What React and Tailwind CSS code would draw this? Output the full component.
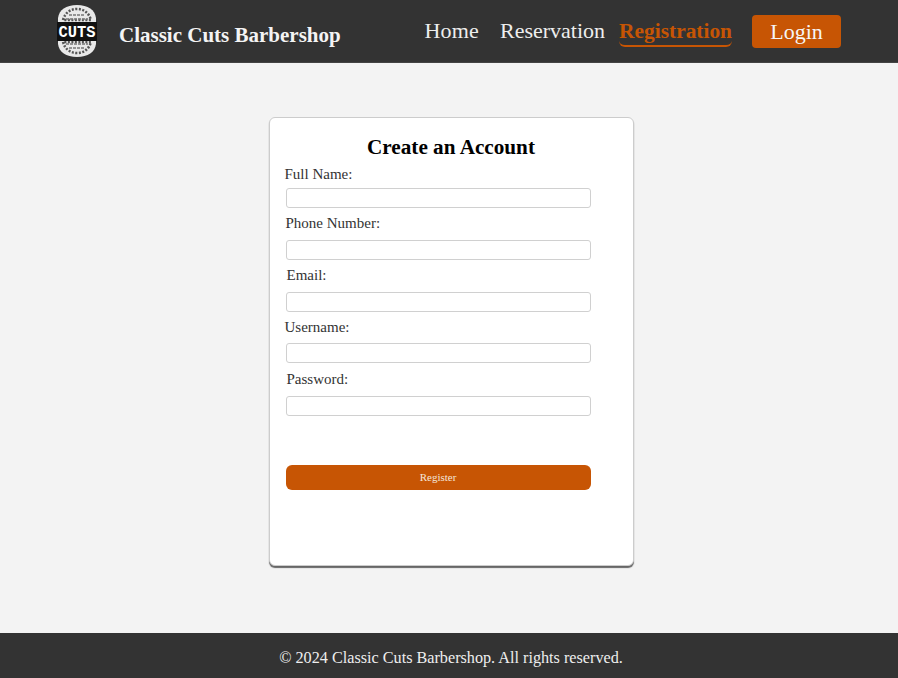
import React from 'react';

const serif = { fontFamily: '"Liberation Serif", serif' };

const Logo = () => (
  <svg width="42" height="54" viewBox="0 0 42 54" className="shrink-0">
    <path d="M21 1C32 1 39 6 40 14V40C39 48 32 53 21 53C10 53 3 48 2 40V14C3 6 10 1 21 1Z" fill="#e9e9e9" />
    <path d="M7 16C9 9 14 5 21 5C28 5 33 9 35 16Z" fill="none" stroke="#555" strokeWidth="2.5" strokeDasharray="2 1.5" />
    <path d="M10 15H32M13 11H29" stroke="#777" strokeWidth="1.5" strokeDasharray="3 1" />
    <path d="M7 38C9 45 14 49 21 49C28 49 33 45 35 38Z" fill="none" stroke="#555" strokeWidth="2.5" strokeDasharray="2 1.5" />
    <path d="M10 40H32M13 44H29" stroke="#777" strokeWidth="1.5" strokeDasharray="3 1" />
    <rect x="1" y="18" width="40" height="19" fill="#111" />
    <text x="21" y="33" textAnchor="middle" fill="#fff" fontSize="17" fontWeight="700" textLength="37" lengthAdjust="spacingAndGlyphs" fontFamily="Liberation Mono, monospace">CUTS</text>
  </svg>
);

const fields = [
  { label: 'Full Name:', labelClass: 'ml-[-1px]', gap: 'mt-[3px]' },
  { label: 'Phone Number:', labelClass: 'mt-[5px]', gap: 'mt-[6px]' },
  { label: 'Email:', labelClass: 'mt-[5px] ml-[1px]', gap: 'mt-[6px]' },
  { label: 'Username:', labelClass: 'mt-[5px] ml-[-1px]', gap: 'mt-[5px]' },
  { label: 'Password:', labelClass: 'mt-[6px] ml-[1px]', gap: 'mt-[6px]' },
];

export default function App() {
  return (
    <div className="min-h-[678px] flex flex-col bg-[#f3f3f3]" style={serif}>
      <header className="h-[63px] bg-[#333333] flex items-center pl-[56px] pr-[57px] border-b border-[#444444]">
        <Logo />
        <span className="ml-[21px] mt-[10px] text-[21px] font-bold text-[#f4f4f4] whitespace-nowrap">Classic Cuts Barbershop</span>
        <nav className="ml-auto flex items-center text-[22px] text-[#eeeeee]">
          <a className="mb-[2px] tracking-[0.2px]">Home</a>
          <a className="ml-[21px] mb-[2px]">Reservation</a>
          <a className="ml-[14px] font-bold text-[21.4px] text-[#c75504] border-b-2 border-[#c75504] rounded-b-md h-[31px] leading-[30px] mt-[1px]">Registration</a>
          <a className="ml-[20px] w-[89px] h-[33px] bg-[#c75504] rounded flex items-center justify-center text-[#f6f6f6]">Login</a>
        </nav>
      </header>

      <main className="flex-1 flex justify-center items-start pt-[54px]">
        <div className="ml-[4px] w-[365px] h-[449px] bg-white rounded-md border border-[#cccccc] shadow-[0_2px_1px_#666666] pl-[16px] pr-[42px] pt-[16px]">
          <h1 className="text-[21.2px] leading-[26px] font-bold text-black text-center ml-[13px] mr-[-13px]">Create an Account</h1>
          <form className="mt-[4px]">
            {fields.map((f) => (
              <div key={f.label}>
                <label className={`block h-[21px] text-[15px] leading-[21px] text-[#333333] ${f.labelClass}`}>{f.label}</label>
                <input type="text" className={`block w-[305px] h-[20px] bg-white border border-[#d0d0d0] rounded-[3px] ${f.gap}`} />
              </div>
            ))}
            <button type="button" className="mt-[49px] block w-[305px] h-[25px] bg-[#c75504] rounded-md text-[11px] text-[#f5e6da]">Register</button>
          </form>
        </div>
      </main>

      <footer className="h-[45px] pt-[5px] pl-[4px] bg-[#333333] flex items-center justify-center text-[16.2px] text-[#eeeeee]">
        © 2024 Classic Cuts Barbershop. All rights reserved.
      </footer>
    </div>
  );
}
